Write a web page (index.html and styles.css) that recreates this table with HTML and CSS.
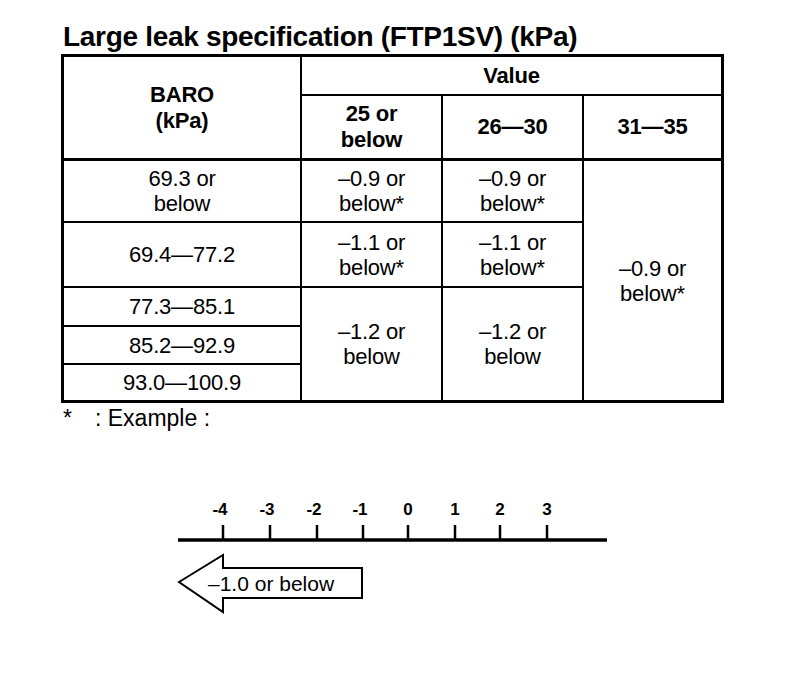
FILE: index.html
```html
<!DOCTYPE html>
<html lang="en">
<head>
<meta charset="utf-8">
<title>Large leak specification</title>
<link rel="stylesheet" href="styles.css">
</head>
<body>
<div class="page">
  <h1 class="title">Large leak specification (FTP1SV) (kPa)</h1>
  <table class="spec">
    <colgroup>
      <col class="c1"><col class="c2"><col class="c3"><col class="c4">
    </colgroup>
    <thead>
      <tr class="h1">
        <th rowspan="2" class="hb baro">BARO<br>(kPa)</th>
        <th colspan="3" class="last">Value</th>
      </tr>
      <tr class="h2">
        <th class="hb">25 or<br>below</th>
        <th class="hb">26—30</th>
        <th class="hb last">31—35</th>
      </tr>
    </thead>
    <tbody>
      <tr class="r1">
        <td>69.3 or<br>below</td>
        <td>–0.9 or<br>below*</td>
        <td>–0.9 or<br>below*</td>
        <td rowspan="5" class="last bottom">–0.9 or<br>below*</td>
      </tr>
      <tr class="r2">
        <td>69.4—77.2</td>
        <td>–1.1 or<br>below*</td>
        <td>–1.1 or<br>below*</td>
      </tr>
      <tr class="r3">
        <td>77.3—85.1</td>
        <td rowspan="3" class="bottom">–1.2 or<br>below</td>
        <td rowspan="3" class="bottom">–1.2 or<br>below</td>
      </tr>
      <tr class="r4">
        <td>85.2—92.9</td>
      </tr>
      <tr class="r5">
        <td class="bottom">93.0—100.9</td>
      </tr>
    </tbody>
  </table>
  <p class="note"><span class="star">*</span><span>: Example :</span></p>
  <div class="diagram">
    <svg class="scale" width="450" height="130" viewBox="0 0 450 130" xmlns="http://www.w3.org/2000/svg">
      <g class="labels" font-family="Liberation Sans, Arial, sans-serif" font-size="17" font-weight="700" text-anchor="middle" fill="#000">
        <text x="50" y="25">-4</text>
        <text x="97" y="25">-3</text>
        <text x="144" y="25">-2</text>
        <text x="190" y="25">-1</text>
        <text x="238" y="25">0</text>
        <text x="285" y="25">1</text>
        <text x="330" y="25">2</text>
        <text x="377" y="25">3</text>
      </g>
      <g stroke="#000" stroke-width="2.5">
        <line x1="53" y1="35" x2="53" y2="50"/>
        <line x1="100" y1="35" x2="100" y2="50"/>
        <line x1="147" y1="35" x2="147" y2="50"/>
        <line x1="193" y1="35" x2="193" y2="50"/>
        <line x1="238" y1="35" x2="238" y2="50"/>
        <line x1="285" y1="35" x2="285" y2="50"/>
        <line x1="330" y1="35" x2="330" y2="50"/>
        <line x1="377" y1="35" x2="377" y2="50"/>
      </g>
      <line x1="8" y1="50" x2="437" y2="50" stroke="#000" stroke-width="3.5"/>
      <polygon points="9,92 53,65 53,78 192,78 192,108 53,108 53,122" fill="#fff" stroke="#000" stroke-width="2"/>
      <text x="38" y="101" font-family="Liberation Sans, Arial, sans-serif" font-size="21" fill="#000">–1.0 or below</text>
    </svg>
  </div>
</div>
</body>
</html>
```

FILE: styles.css
```css
html, body {
  margin: 0;
  padding: 0;
  background: #fff;
}

body {
  color: #000;
  font-family: "Liberation Sans", Arial, sans-serif;
}

.page {
  padding: 21px 0 0 61px;
}

.title {
  margin: 0 0 1px 2px;
  font-size: 28px;
  line-height: 32px;
  font-weight: 700;
  letter-spacing: -0.3px;
}

.spec {
  border-collapse: separate;
  border-spacing: 0;
  border: 3px solid #000;
  table-layout: fixed;
  width: 663px;
}

.c1 { width: 238px; }
.c2 { width: 141px; }
.c3 { width: 141px; }
.c4 { width: 137px; }

.spec th,
.spec td {
  padding: 0;
  text-align: center;
  vertical-align: middle;
  border-right: 2px solid #000;
  border-bottom: 2px solid #000;
  font-size: 22px;
  line-height: 25px;
  letter-spacing: -0.2px;
}

.spec th {
  font-weight: 700;
  line-height: 26px;
}

.spec .hb {
  border-bottom: 3px solid #000;
}

.spec .last {
  border-right: 0;
}

.spec .bottom {
  border-bottom: 0;
}

.h1 { height: 39px; }
.h2 { height: 65px; }
.r1 { height: 62px; }
.r2 { height: 65px; }
.r3 { height: 39px; }
.r4 { height: 38px; }
.r5 { height: 35px; }

.note {
  margin: 3px 0 0 2px;
  font-size: 23px;
  line-height: 24px;
  display: flex;
}

.star {
  width: 32px;
}

.diagram {
  margin: 60px 0 0 109px;
}

.scale {
  display: block;
}
```
